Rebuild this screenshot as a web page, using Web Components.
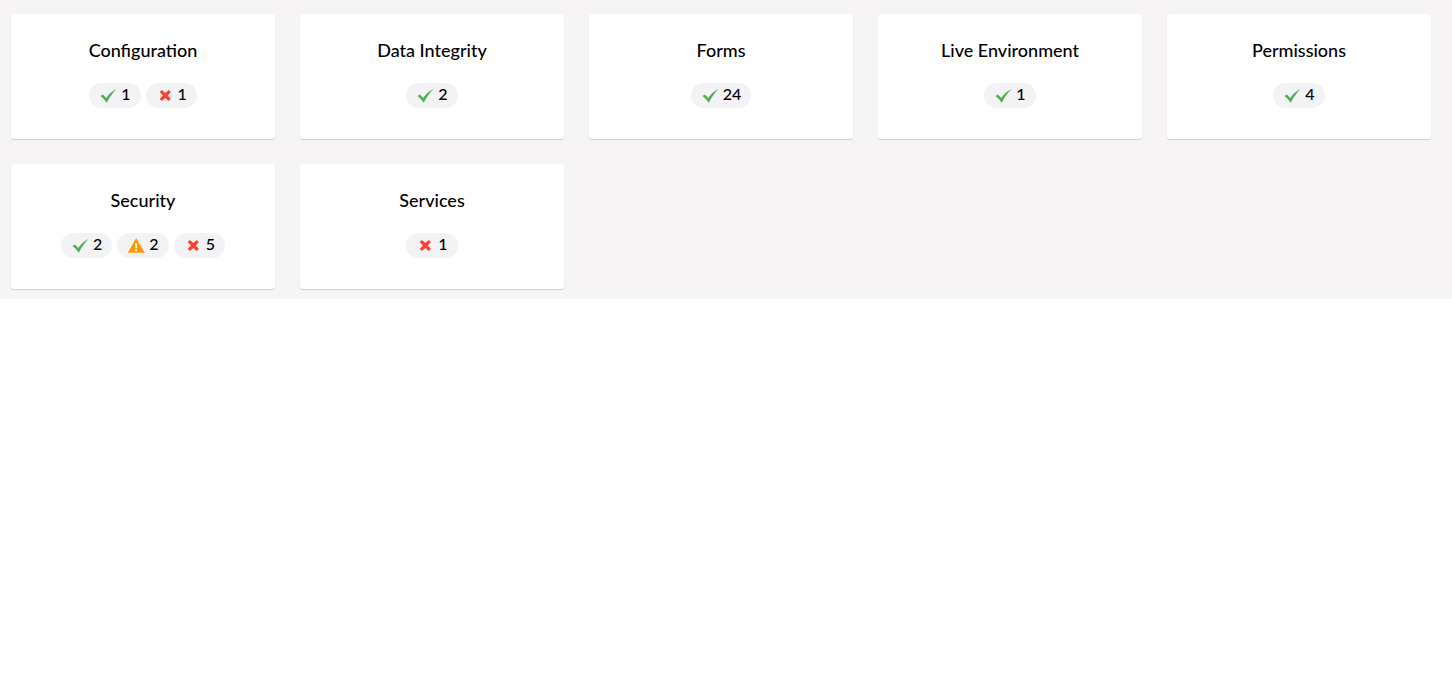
<!DOCTYPE html>
<html lang="en">
<head>
<meta charset="utf-8">
<title>Health Check</title>
<style>
body { margin: 0; background: #fff; color: #000; font-family: Lato, sans-serif; font-size: 16px; }
</style>
</head>
<body>
<health-dashboard>
  <health-group name="Configuration">
    <status-pill kind="success">1</status-pill>
    <status-pill kind="error">1</status-pill>
  </health-group>
  <health-group name="Data Integrity">
    <status-pill kind="success">2</status-pill>
  </health-group>
  <health-group name="Forms">
    <status-pill kind="success">24</status-pill>
  </health-group>
  <health-group name="Live Environment">
    <status-pill kind="success">1</status-pill>
  </health-group>
  <health-group name="Permissions">
    <status-pill kind="success">4</status-pill>
  </health-group>
  <health-group name="Security">
    <status-pill kind="success">2</status-pill>
    <status-pill kind="warning">2</status-pill>
    <status-pill kind="error">5</status-pill>
  </health-group>
  <health-group name="Services">
    <status-pill kind="error">1</status-pill>
  </health-group>
</health-dashboard>

<script>
class HealthDashboard extends HTMLElement {
  constructor() {
    super();
    this.attachShadow({ mode: 'open' }).innerHTML = `
      <style>
        :host { display: block; background: #f6f4f5; padding: 14px 21px 10px 11px; }
        main { display: grid; grid-template-columns: repeat(auto-fill, minmax(240px, 1fr)); gap: 25px; }
      </style>
      <main><slot></slot></main>`;
  }
}

class HealthGroup extends HTMLElement {
  constructor() {
    super();
    this.attachShadow({ mode: 'open' }).innerHTML = `
      <style>
        :host { display: block; }
        button {
          display: flex; flex-direction: column; align-items: center; gap: 21px;
          box-sizing: border-box; width: 100%; min-height: 125px; padding: 24px 20px 25px;
          border: 0; border-radius: 3px; background: #fff; color: inherit; font: inherit;
          box-shadow: 0 1px 1px rgba(0, 0, 0, .16); cursor: pointer;
        }
        .name { font-size: 18px; line-height: 24px; font-weight: 500; }
        .results { display: flex; flex-wrap: wrap; justify-content: center; gap: 5px; }
      </style>
      <button type="button">
        <span class="name"></span>
        <span class="results"><slot></slot></span>
      </button>`;
    this.shadowRoot.querySelector('.name').textContent = this.getAttribute('name');
  }
}

const ICONS = {
  success: '<path fill="#4caf50" d="M1.4 7.9 3.9 6.5 7.2 9.9C9.9 6.2 13.1 3 17.8.7 13.8 4.7 10.4 9 7.8 14.8 6 12 4 9.8 1.4 7.9z"/>',
  error: '<path fill="#f44336" d="M3.7 4.1 5.9 1.9 9.3 5.1 12.7 1.9 14.9 4.1 11.7 7.5 14.9 10.9 12.7 13.1 9.3 9.9 5.9 13.1 3.7 10.9 6.9 7.5z"/>',
  warning: '<path fill="#ff9800" d="M9.2.1 17.6 14.8H.8z"/><path fill="#fff" d="M8.2 5h2l-.4 5.2H8.6zM8.2 11.2h2v2h-2z"/>'
};

class StatusPill extends HTMLElement {
  constructor() {
    super();
    this.attachShadow({ mode: 'open' }).innerHTML = `
      <style>
        :host {
          display: inline-flex; align-items: center; gap: 4px; height: 25px; padding: 0 10px;
          box-sizing: border-box; border-radius: 13px; background: #f3f3f5;
          font-size: 16px; line-height: 22px; font-weight: 500;
        }
        svg { display: block; width: 18px; height: 16px; }
        span { height: 25px; }
      </style>
      <svg viewBox="0 0 18 16" aria-hidden="true">${ICONS[this.getAttribute('kind')]}</svg>
      <span><slot></slot></span>`;
  }
}

customElements.define('health-dashboard', HealthDashboard);
customElements.define('health-group', HealthGroup);
customElements.define('status-pill', StatusPill);
</script>
</body>
</html>
